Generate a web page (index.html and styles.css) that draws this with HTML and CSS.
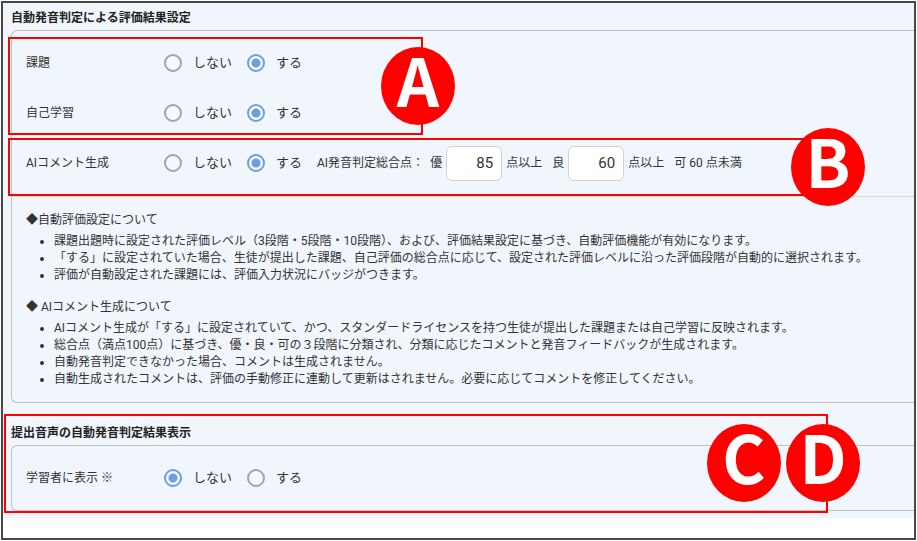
FILE: index.html
```html
<!DOCTYPE html>
<html lang="ja">
<head>
    <meta charset="UTF-8">
    <meta name="viewport" content="width=device-width, initial-scale=1.0">
    <title>自動発音判定による評価結果設定</title>
    <link rel="stylesheet" href="styles.css">
</head>
<body>

<div class="frame">
    <form class="settings">
        <section class="section">
            <h2>自動発音判定による評価結果設定</h2>
            <div class="panel">
                <div class="rows">
                    <div class="row" role="radiogroup" aria-labelledby="taskLabel">
                        <span class="row-label" id="taskLabel">課題</span>
                        <label class="option"><input type="radio" name="task" value="0">しない</label>
                        <label class="option"><input type="radio" name="task" value="1" checked>する</label>
                    </div>
                    <div class="row" role="radiogroup" aria-labelledby="selfLabel">
                        <span class="row-label" id="selfLabel">自己学習</span>
                        <label class="option"><input type="radio" name="self" value="0">しない</label>
                        <label class="option"><input type="radio" name="self" value="1" checked>する</label>
                    </div>
                    <div class="mark mark-a"><span class="badge">A</span></div>
                </div>
                <div class="rows rows-comment">
                    <div class="row" role="radiogroup" aria-labelledby="commentLabel">
                        <span class="row-label" id="commentLabel">AIコメント生成</span>
                        <label class="option"><input type="radio" name="comment" value="0">しない</label>
                        <label class="option"><input type="radio" name="comment" value="1" checked>する</label>
                        <div class="scores">
                            <span class="scores-title">AI発音判定総合点：</span>
                            <label for="scoreHigh">優</label>
                            <input type="text" id="scoreHigh" name="scoreHigh" value="85">
                            <span class="unit">点以上</span>
                            <label for="scoreMiddle">良</label>
                            <input type="text" id="scoreMiddle" name="scoreMiddle" value="60">
                            <span class="unit">点以上</span>
                            <span>可 60 点未満</span>
                        </div>
                    </div>
                    <div class="mark mark-b"><span class="badge">B</span></div>
                </div>
                <div class="notes">
                    <p>◆自動評価設定について</p>
                    <ul>
                        <li>課題出題時に設定された評価レベル（3段階・5段階・10段階）、および、評価結果設定に基づき、自動評価機能が有効になります。</li>
                        <li>「する」に設定されていた場合、生徒が提出した課題、自己評価の総合点に応じて、設定された評価レベルに沿った評価段階が自動的に選択されます。</li>
                        <li>評価が自動設定された課題には、評価入力状況にバッジがつきます。</li>
                    </ul>
                    <p>◆ AIコメント生成について</p>
                    <ul>
                        <li>AIコメント生成が「する」に設定されていて、かつ、スタンダードライセンスを持つ生徒が提出した課題または自己学習に反映されます。</li>
                        <li>総合点（満点100点）に基づき、優・良・可の３段階に分類され、分類に応じたコメントと発音フィードバックが生成されます。</li>
                        <li>自動発音判定できなかった場合、コメントは生成されません。</li>
                        <li>自動生成されたコメントは、評価の手動修正に連動して更新はされません。必要に応じてコメントを修正してください。</li>
                    </ul>
                </div>
            </div>
        </section>

        <section class="section">
            <h2>提出音声の自動発音判定結果表示</h2>
            <div class="panel panel-result">
                <div class="row" role="radiogroup" aria-labelledby="showLabel">
                    <span class="row-label" id="showLabel">学習者に表示 ※</span>
                    <label class="option"><input type="radio" name="show" value="0" checked>しない</label>
                    <label class="option"><input type="radio" name="show" value="1">する</label>
                </div>
            </div>
            <div class="mark mark-c"><span class="badge badge-c">C</span><span class="badge">D</span></div>
        </section>
    </form>
</div>

</body>
</html>
```

FILE: styles.css
```css
* {
    box-sizing: border-box;
}

body {
    margin: 1px 1px 0;
    background-color: #fff;
    color: #333;
    font-family: Roboto, "Noto Sans CJK JP", sans-serif;
    font-size: 12px;
    line-height: 18px;
}

.frame {
    border: 2px solid #484848;
    padding-bottom: 20px;
}

.settings {
    display: flex;
    flex-direction: column;
    gap: 21px;
    padding: 6px 0 7px 8px;
    background-color: #f1f6fd;
}

.section {
    position: relative;
}

.section h2 {
    margin: 0 0 3px;
    color: #222;
    font-size: 12px;
    font-weight: bold;
}

.panel {
    border: 1px solid #bfc1c3;
    border-right: none;
    border-radius: 6px 0 0 6px;
    padding-top: 7px;
}

.panel-result {
    padding-bottom: 7px;
}

.rows {
    position: relative;
}

.rows-comment {
    padding-bottom: 8px;
    border-bottom: 1px solid #d5d8dc;
}

.row {
    display: flex;
    align-items: center;
    gap: 15px;
    height: 50px;
    padding-left: 14px;
}

.row-label {
    width: 123px;
}

.option {
    display: flex;
    align-items: center;
    gap: 11px;
    font-size: 13px;
}

.option input {
    appearance: none;
    width: 18px;
    height: 18px;
    margin: 0;
    border: 2px solid #a0a4ab;
    border-radius: 50%;
    background-color: #f5f8fc;
}

.option input:checked {
    border-color: #6b9fe0;
    background: radial-gradient(circle, #6b9fe0 4px, #f5f8fc 5px);
}

.scores {
    display: flex;
    align-items: center;
    gap: 4px;
}

.scores-title {
    margin-right: 2px;
}

.scores input {
    width: 56px;
    height: 35px;
    padding: 0 8px;
    border: 1px solid #d0d2d5;
    border-radius: 6px;
    background-color: #fff;
    color: #333;
    font-family: inherit;
    font-size: 15px;
    text-align: right;
}

.scores .unit {
    margin-right: 6px;
}

.notes {
    padding: 14px;
}

.notes p {
    margin: 0 0 4px;
}

.notes ul {
    margin: 0;
    padding-left: 28px;
    line-height: 17px;
}

.notes ul + p {
    margin-top: 14px;
}

/* red frames and lettered badges over the form */
.mark {
    position: absolute;
    border: 2px solid #f00;
    pointer-events: none;
}

.mark-a {
    top: -1px;
    bottom: 3px;
    left: -4px;
    width: 415px;
}

.mark-b {
    top: 0;
    right: 87px;
    bottom: 0;
    left: -4px;
}

.mark-c {
    top: -10px;
    right: 86px;
    bottom: -2px;
    left: -7px;
}

.badge {
    position: absolute;
    top: 50%;
    right: -34px;
    display: flex;
    align-items: center;
    justify-content: center;
    width: 74px;
    height: 78px;
    margin-top: -39px;
    padding-bottom: 16px;
    border-radius: 50%;
    background-color: #f00;
    color: #fff;
    font-family: "Noto Sans CJK JP", sans-serif;
    font-size: 66px;
    font-weight: bold;
    line-height: 62px;
}

.mark-b .badge {
    right: -40px;
}

.mark-c .badge {
    top: 8px;
    margin-top: 0;
}

.badge-c {
    right: 45px;
}
```
